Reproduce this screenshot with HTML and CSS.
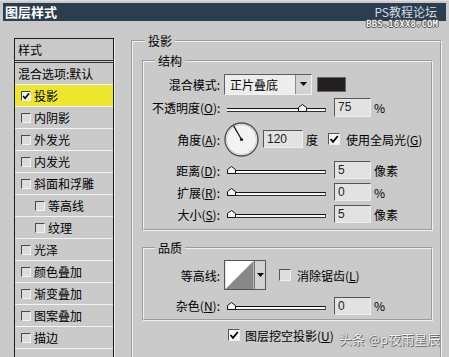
FILE: index.html
```html
<!DOCTYPE html>
<html lang="zh">
<head>
    <meta charset="UTF-8">
    <title>图层样式</title>
    <link rel="stylesheet" href="styles.css">
</head>
<body>
<div class="window">
    <!-- Title bar -->
    <div class="titlebar">
        <span class="title">图层样式</span>
        <span class="brand">PS教程论坛</span>
    </div>
    <div class="brand-url">BBS.16XX8.COM</div>

    <div class="main">
        <!-- Style list -->
        <div class="style-list">
            <div class="list-head">样式</div>
            <div class="list-item plain">混合选项:默认</div>
            <div class="list-item active"><span class="box checked"><svg width="8" height="8" viewBox="0 0 8 8"><path d="M1 4 L3 6.2 L7 1.5" fill="none" stroke="#000" stroke-width="1.6"/></svg></span>投影</div>
            <div class="list-item"><span class="box"></span>内阴影</div>
            <div class="list-item"><span class="box"></span>外发光</div>
            <div class="list-item"><span class="box"></span>内发光</div>
            <div class="list-item"><span class="box"></span>斜面和浮雕</div>
            <div class="list-item sub"><span class="box"></span>等高线</div>
            <div class="list-item sub"><span class="box"></span>纹理</div>
            <div class="list-item"><span class="box"></span>光泽</div>
            <div class="list-item"><span class="box"></span>颜色叠加</div>
            <div class="list-item"><span class="box"></span>渐变叠加</div>
            <div class="list-item"><span class="box"></span>图案叠加</div>
            <div class="list-item"><span class="box"></span>描边</div>
            <div class="list-item"></div>
        </div>

        <!-- Drop shadow settings -->
        <fieldset class="group outer">
            <legend>投影</legend>

            <fieldset class="group inner">
                <legend>结构</legend>
                <div class="row row-blend">
                    <span class="label">混合模式:</span>
                    <div class="select">
                        <span class="select-value">正片叠底</span>
                        <span class="select-btn"><svg width="7" height="4" viewBox="0 0 7 4"><path d="M0 0 H7 L3.5 4 Z" fill="#000"/></svg></span>
                    </div>
                    <span class="swatch"></span>
                </div>
                <div class="row row-opacity">
                    <span class="label">不透明度(<u>O</u>):</span>
                    <div class="slider"><div class="track"></div><svg class="thumb" style="left: 71px" width="9" height="8" viewBox="0 0 9 8"><path d="M0.5 7.5 V3.5 L4.5 0.5 L8.5 3.5 V7.5 Z" fill="#f2f2f2" stroke="#111"/></svg></div>
                    <span class="num">75</span>
                    <span class="unit">%</span>
                </div>
                <div class="row row-angle">
                    <span class="label">角度(<u>A</u>):</span>
                    <svg class="dial" width="35" height="35" viewBox="0 0 35 35">
                        <circle cx="17.5" cy="17.5" r="16.5" fill="#f3f3f3" stroke="#4d5560" stroke-width="1.4"/>
                        <circle cx="17.5" cy="17.5" r="15" fill="none" stroke="#c9ccd0" stroke-width="1"/>
                        <line x1="17.5" y1="17.5" x2="9.5" y2="3.6" stroke="#111" stroke-width="1.2"/>
                        <circle cx="17.5" cy="17.5" r="1.6" fill="#111"/>
                    </svg>
                    <span class="num wide">120</span>
                    <span class="unit">度</span>
                    <span class="check checked"><svg width="10" height="10" viewBox="0 0 10 10"><path d="M1.5 5 L4 7.8 L8.8 2" fill="none" stroke="#000" stroke-width="1.8"/></svg></span>
                    <span class="check-text">使用全局光(<u>G</u>)</span>
                </div>
                <div class="row row-small">
                    <span class="label">距离(<u>D</u>):</span>
                    <div class="slider"><div class="track"></div><svg class="thumb" style="left: 0px" width="9" height="8" viewBox="0 0 9 8"><path d="M0.5 7.5 V3.5 L4.5 0.5 L8.5 3.5 V7.5 Z" fill="#f2f2f2" stroke="#111"/></svg></div>
                    <span class="num">5</span>
                    <span class="unit">像素</span>
                </div>
                <div class="row row-small">
                    <span class="label">扩展(<u>R</u>):</span>
                    <div class="slider"><div class="track"></div><svg class="thumb" style="left: 0px" width="9" height="8" viewBox="0 0 9 8"><path d="M0.5 7.5 V3.5 L4.5 0.5 L8.5 3.5 V7.5 Z" fill="#f2f2f2" stroke="#111"/></svg></div>
                    <span class="num">0</span>
                    <span class="unit">%</span>
                </div>
                <div class="row row-small">
                    <span class="label">大小(<u>S</u>):</span>
                    <div class="slider"><div class="track"></div><svg class="thumb" style="left: 0px" width="9" height="8" viewBox="0 0 9 8"><path d="M0.5 7.5 V3.5 L4.5 0.5 L8.5 3.5 V7.5 Z" fill="#f2f2f2" stroke="#111"/></svg></div>
                    <span class="num">5</span>
                    <span class="unit">像素</span>
                </div>
            </fieldset>

            <fieldset class="group quality">
                <legend>品质</legend>
                <div class="row row-contour">
                    <span class="label">等高线:</span>
                    <div class="contour">
                        <svg class="contour-preview" width="30" height="30" viewBox="0 0 30 30">
                            <rect width="30" height="30" fill="#fff"/>
                            <path d="M0 30 L30 0 V30 Z" fill="#888"/>
                        </svg>
                        <span class="contour-btn"><svg width="7" height="4" viewBox="0 0 7 4"><path d="M0 0 H7 L3.5 4 Z" fill="#000"/></svg></span>
                    </div>
                    <span class="check"></span>
                    <span class="check-text">消除锯齿(<u>L</u>)</span>
                </div>
                <div class="row row-noise">
                    <span class="label">杂色(<u>N</u>):</span>
                    <div class="slider"><div class="track"></div><svg class="thumb" style="left: 0px" width="9" height="8" viewBox="0 0 9 8"><path d="M0.5 7.5 V3.5 L4.5 0.5 L8.5 3.5 V7.5 Z" fill="#f2f2f2" stroke="#111"/></svg></div>
                    <span class="num">0</span>
                    <span class="unit">%</span>
                </div>
            </fieldset>

            <div class="knockout">
                <span class="check checked"><svg width="10" height="10" viewBox="0 0 10 10"><path d="M1.5 5 L4 7.8 L8.8 2" fill="none" stroke="#000" stroke-width="1.8"/></svg></span>
                <span class="check-text">图层挖空投影(<u>U</u>)</span>
            </div>
        </fieldset>
    </div>

    <!-- Watermark -->
    <div class="watermark">头条 @p夜雨星辰</div>
</div>
</body>
</html>
```

FILE: styles.css
```css
/* General */
* {
    box-sizing: border-box;
}
body {
    margin: 0;
    width: 449px;
    height: 357px;
    overflow: hidden;
    background: #cacaca;
    font-family: "Noto Sans CJK SC", sans-serif;
    font-size: 12px;
    color: #000;
}
u {
    text-decoration: underline;
    text-underline-offset: 1px;
}
.window {
    position: relative;
    height: 357px;
    overflow: hidden;
    border-top: 1px solid #dedede;
}

/* Title bar */
.titlebar {
    height: 18px;
    margin: 2px 3px 0 3px;
    padding-left: 2px;
    background: #2b3e50;
    display: flex;
    align-items: center;
}
.title {
    color: #fff;
    font-weight: bold;
    font-size: 13px;
    line-height: 18px;
}
.brand {
    margin-left: auto;
    margin-right: 9px;
    color: #d5dbe1;
    font-size: 12px;
    line-height: 18px;
}
.brand-url {
    position: absolute;
    top: 18px;
    right: 11px;
    font-family: "DejaVu Sans Mono", monospace;
    font-size: 9px;
    font-weight: bold;
    line-height: 11px;
    letter-spacing: 0.1px;
    color: #f2f2f2;
    text-shadow: 1px 0 0 #5a5a5a, -1px 0 0 #5a5a5a, 0 1px 0 #5a5a5a, 0 -1px 0 #5a5a5a;
}

/* Main area */
.main {
    display: flex;
    align-items: flex-start;
    padding: 0 7px 0 14px;
}

/* Style list */
.style-list {
    width: 100px;
    height: 330px;
    margin-top: 17px;
    border: 1px solid #1c1c1c;
    box-shadow: 1px 1px 0 #ececec;
    flex-shrink: 0;
}
.list-head {
    height: 24px;
    padding-left: 3px;
    line-height: 21px;
    border-bottom: 3px double #333;
}
.list-item {
    height: 22px;
    display: flex;
    align-items: center;
    gap: 3px;
    padding-left: 6px;
    border-bottom: 1px solid #f4f4f4;
    white-space: nowrap;
}
.list-item.plain {
    padding-left: 3px;
}
.list-item.sub {
    padding-left: 20px;
}
.list-item.active {
    background: #ece62c;
}
.box {
    width: 10px;
    height: 10px;
    border-top: 1px solid #4a4a4a;
    border-left: 1px solid #4a4a4a;
    border-bottom: 1px solid #f4f4f4;
    border-right: 1px solid #f4f4f4;
    background: #dcdcdc;
    display: flex;
    align-items: center;
    justify-content: center;
}
.box.checked {
    background: #f4f4f4;
}

/* Group boxes */
.group {
    margin: 0;
    min-width: 0;
    border: 2px groove #f0f0f0;
}
.group legend {
    padding: 0 3px;
    margin-left: 3px;
    line-height: 16px;
}
.outer {
    flex: 1;
    height: 330px;
    margin-left: 17px;
    margin-top: 12px;
    padding: 4px 7px 0 9px;
}
.inner {
    padding: 4px 8px 5px 8px;
}
.quality {
    margin-top: 9px;
    padding: 4px 8px 3px 8px;
}

/* Rows */
.row {
    display: flex;
    align-items: center;
    white-space: nowrap;
}
.label {
    width: 68px;
    text-align: right;
    margin-right: 4px;
    flex-shrink: 0;
}
.row-blend {
    height: 22px;
}
.row-opacity {
    height: 21px;
    margin-top: 2px;
}
.row-angle {
    height: 38px;
    margin-top: 2px;
}
.row-small {
    height: 20px;
    margin-top: 2px;
}
.row-contour {
    height: 30px;
}
.row-noise {
    height: 21px;
    margin-top: 5px;
}

/* Controls */
.select {
    width: 88px;
    height: 21px;
    display: flex;
    border: 1px solid;
    border-color: #5e5e5e #f2f2f2 #f2f2f2 #5e5e5e;
    background: #ededed;
}
.select-value {
    flex: 1;
    padding-left: 5px;
    line-height: 19px;
}
.select-btn {
    width: 16px;
    background: #d2d2d2;
    border-left: 1px solid #8a8a8a;
    display: flex;
    align-items: center;
    justify-content: center;
}
.swatch {
    width: 29px;
    height: 15px;
    margin-left: 5px;
    background: #231f20;
    border: 1px solid #666;
}
.slider {
    position: relative;
    width: 99px;
    height: 8px;
    margin-left: 3px;
}
.track {
    margin-top: 4px;
    height: 4px;
    border-top: 1px solid #111;
    border-bottom: 1px solid #333;
    border-right: 1px solid #555;
    background: #f6f6f6;
}
.thumb {
    position: absolute;
    top: 0;
}
.num {
    width: 37px;
    height: 18px;
    margin-left: 8px;
    padding-left: 3px;
    border: 1px solid;
    border-color: #555 #eee #eee #555;
    background: #e2e2e2;
    font-family: "Liberation Sans", Arial, sans-serif;
    font-size: 12px;
    line-height: 16px;
    color: #222;
}
.row-opacity .num {
    height: 19px;
    line-height: 17px;
}
.num.wide {
    width: 40px;
    margin-left: 4px;
}
.unit {
    margin-left: 3px;
}
.dial {
    flex-shrink: 0;
}
.check {
    width: 12px;
    height: 12px;
    margin-left: 10px;
    border: 1px solid;
    border-color: #555 #eee #eee #555;
    background: #dedede;
    display: flex;
    align-items: center;
    justify-content: center;
    flex-shrink: 0;
}
.check.checked {
    background: #f6f6f6;
}
.check-text {
    margin-left: 6px;
}
.contour {
    display: flex;
    height: 30px;
    border: 1px solid #555;
}
.contour-preview {
    display: block;
    width: 29px;
    height: 28px;
}
.contour-btn {
    width: 11px;
    background: #d2d2d2;
    border-left: 1px solid #777;
    display: flex;
    align-items: center;
    justify-content: center;
}
.row-contour .check {
    margin-left: 13px;
}

/* Knockout option */
.knockout {
    display: flex;
    align-items: center;
    height: 14px;
    margin-top: 7px;
    margin-left: 76px;
}
.knockout .check-text {
    margin-left: 5px;
}

/* Watermark */
.watermark {
    position: absolute;
    top: 329px;
    right: 9px;
    font-size: 13px;
    line-height: 18px;
    color: #f4f4f4;
    text-shadow: 1px 1px 0 #6a6a6a, 0 0 1px #555;
}
```
